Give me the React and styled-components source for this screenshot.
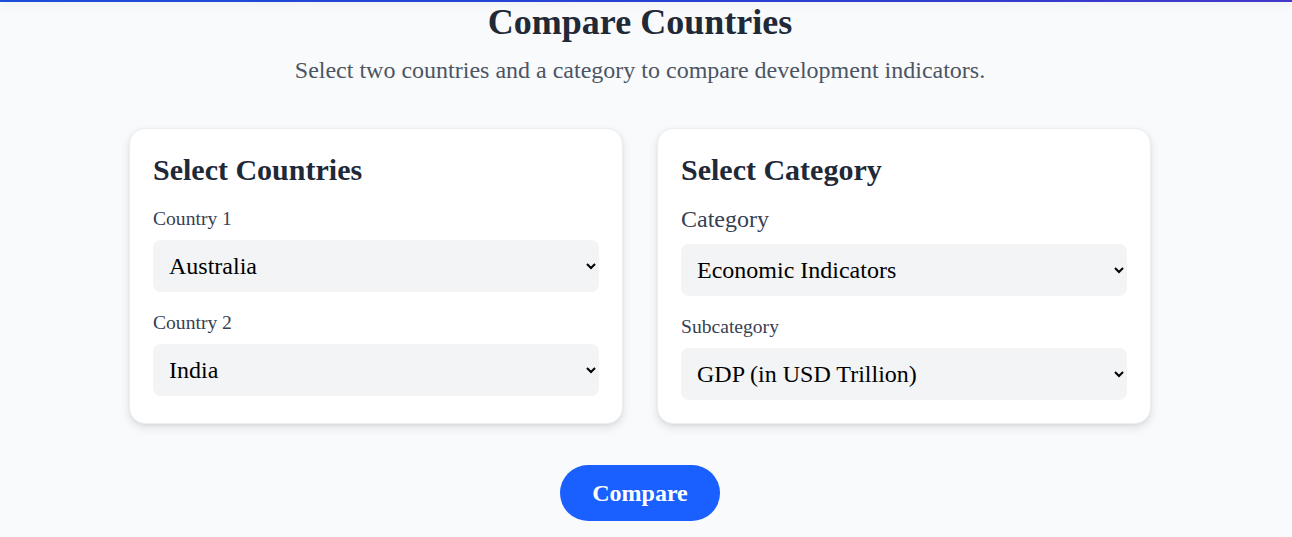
import React from "react";
import styled, { createGlobalStyle } from "styled-components";

const GlobalStyle = createGlobalStyle`
  * { box-sizing: border-box; }
  body {
    margin: 0;
    background: #f9fafb;
    font-family: "Liberation Serif", "Times New Roman", serif;
    color: #1f2937;
  }
`;

const TopBar = styled.div`
  height: 2px;
  background: linear-gradient(90deg, #1d4ed8, #2a3fd1 60%, #4338ca);
  box-shadow: 0 2px 10px rgba(0, 0, 0, 0.12);
`;

const Main = styled.main`
  display: flex;
  flex-direction: column;
  align-items: center;
  padding: 0 12px 16px 0;
`;

const Title = styled.h1`
  margin: 0 0 12px;
  font-size: 36px;
  line-height: 40px;
  font-weight: 700;
  color: #1f2937;
`;

const Subtitle = styled.p`
  margin: 0 0 42px;
  font-size: 24px;
  line-height: 32px;
  color: #4b5563;
`;

const Grid = styled.div`
  display: grid;
  grid-template-columns: 494px 494px;
  gap: 34px;
`;

const Card = styled.section`
  background: #ffffff;
  border: 1px solid #eceef1;
  border-radius: 16px;
  padding: 23px;
  box-shadow: 0 4px 10px rgba(0, 0, 0, 0.1), 0 1px 3px rgba(0, 0, 0, 0.06);
`;

const CardTitle = styled.h2`
  margin: 0 0 19px;
  font-size: 30px;
  line-height: 36px;
  font-weight: 700;
  color: #1f2937;
`;

const Field = styled.div`
  display: flex;
  flex-direction: column;
  & + & {
    margin-top: ${({ $gap }) => $gap || 18}px;
  }
`;

const Label = styled.label`
  font-size: ${({ $large }) => ($large ? 24 : 19.6)}px;
  line-height: 24px;
  margin-bottom: ${({ $large }) => ($large ? 13 : 9)}px;
  color: #374151;
`;

const Select = styled.select`
  width: 100%;
  height: 52px;
  padding: 0 8px 0 12px;
  border: none;
  border-radius: 8px;
  background: #f3f4f6;
  font-family: "Liberation Serif", "Times New Roman", serif;
  font-size: 24px;
  color: #000000;
  outline: none;
`;

const CompareButton = styled.button`
  margin-top: 41px;
  width: 160px;
  height: 56px;
  border: none;
  border-radius: 28px;
  background: #1a5fff;
  color: #ffffff;
  font-family: "Liberation Serif", "Times New Roman", serif;
  font-size: 24px;
  font-weight: 700;
  cursor: pointer;
`;

const countries = ["Australia", "India", "Brazil", "Canada", "China", "Germany", "Japan"];
const categories = ["Economic Indicators", "Social Indicators", "Environmental Indicators"];
const subcategories = ["GDP (in USD Trillion)", "GDP Growth Rate (%)", "Inflation Rate (%)"];

export default function App() {
  return (
    <>
      <GlobalStyle />
      <TopBar />
      <Main>
        <Title>Compare Countries</Title>
        <Subtitle>
          Select two countries and a category to compare development indicators.
        </Subtitle>
        <Grid>
          <Card>
            <CardTitle>Select Countries</CardTitle>
            <Field>
              <Label>Country 1</Label>
              <Select defaultValue="Australia">
                {countries.map((c) => (
                  <option key={c}>{c}</option>
                ))}
              </Select>
            </Field>
            <Field>
              <Label>Country 2</Label>
              <Select defaultValue="India">
                {countries.map((c) => (
                  <option key={c}>{c}</option>
                ))}
              </Select>
            </Field>
          </Card>
          <Card>
            <CardTitle>Select Category</CardTitle>
            <Field>
              <Label $large>Category</Label>
              <Select defaultValue="Economic Indicators">
                {categories.map((c) => (
                  <option key={c}>{c}</option>
                ))}
              </Select>
            </Field>
            <Field $gap={19}>
              <Label>Subcategory</Label>
              <Select defaultValue="GDP (in USD Trillion)">
                {subcategories.map((c) => (
                  <option key={c}>{c}</option>
                ))}
              </Select>
            </Field>
          </Card>
        </Grid>
        <CompareButton>Compare</CompareButton>
      </Main>
    </>
  );
}
